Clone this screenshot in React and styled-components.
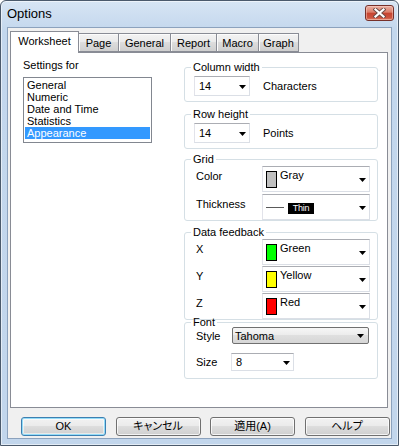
import React from "react";
import styled, { createGlobalStyle } from "styled-components";

const GlobalStyle = createGlobalStyle`
  html, body {
    margin: 0;
    padding: 0;
    background: #fff;
  }
  body {
    font-family: "Liberation Sans", "Noto Sans CJK JP", sans-serif;
    font-size: 11px;
    color: #000;
  }
`;

const Window = styled.div`
  width: 399px;
  height: 446px;
  box-sizing: border-box;
  border: 1px solid #4b5a6c;
  border-radius: 6px 6px 0 0;
  background: linear-gradient(#d7e5f4, #c3d7ed 30px, #c2d6ec);
  box-shadow: inset 0 0 0 1px rgba(255, 255, 255, 0.55);
  display: flex;
  flex-direction: column;
`;

const TitleBar = styled.div`
  height: 26px;
  flex: none;
  display: flex;
  align-items: flex-start;
  justify-content: space-between;
  padding: 0 4px 0 6px;
`;

const Title = styled.span`
  font-size: 13px;
  line-height: 16px;
  margin-top: 5px;
`;

const CloseButton = styled.div`
  width: 29px;
  height: 16px;
  margin-top: 4px;
  box-sizing: border-box;
  border: 1px solid #76302a;
  border-radius: 3px;
  background: linear-gradient(#eab0a3, #db7d69 45%, #c6432f 50%, #cd5540 85%, #df8870);
  box-shadow: inset 0 0 0 1px rgba(255, 220, 210, 0.45);
  display: grid;
  place-items: center;
`;

const Client = styled.div`
  flex: 1;
  min-height: 0;
  margin: 0 6px 6px;
  border: 1px solid #8ca2bd;
  background: #f0f0f0;
  padding: 3px 3px 2px 2px;
  display: flex;
  flex-direction: column;
`;

const TabStrip = styled.div`
  height: 21px;
  flex: none;
  display: flex;
  align-items: flex-end;
`;

const Tab = styled.div`
  position: relative;
  box-sizing: border-box;
  width: ${(p) => p.$w}px;
  height: ${(p) => (p.$active ? 22 : 19)}px;
  margin-left: ${(p) => (p.$first ? 0 : -1)}px;
  margin-bottom: ${(p) => (p.$active ? -1 : 0)}px;
  padding-bottom: ${(p) => (p.$active ? 3 : 0)}px;
  z-index: ${(p) => (p.$active ? 2 : 1)};
  border: 1px solid #898c95;
  border-bottom: ${(p) => (p.$active ? "none" : "1px solid #898c95")};
  background: ${(p) =>
    p.$active
      ? "#fff"
      : "linear-gradient(#f3f3f3, #ebebeb 45%, #dddddd 50%, #cfcfcf)"};
  box-shadow: ${(p) => (p.$active ? "none" : "inset 1px 1px 0 #fcfcfc")};
  display: grid;
  place-items: center;
  line-height: 12px;
`;

const TabPanel = styled.div`
  flex: 1;
  min-height: 0;
  border: 1px solid #898c95;
  background: #fff;
  padding: 6px 9px 0 12px;
  display: grid;
  grid-template-columns: 129px 194px;
  column-gap: 32px;
  align-items: start;
  align-content: start;
`;

const LeftColumn = styled.div`
  display: flex;
  flex-direction: column;
`;

const Caption = styled.div`
  line-height: 12px;
  margin-bottom: 6px;
`;

const ListBox = styled.div`
  height: 66px;
  box-sizing: border-box;
  border: 1px solid #828790;
  padding: 1px;
`;

const ListItem = styled.div`
  line-height: 12px;
  padding-left: 2px;
  background: ${(p) => (p.$selected ? "#3399ff" : "transparent")};
  color: ${(p) => (p.$selected ? "#fff" : "#000")};
`;

const RightColumn = styled.div`
  display: flex;
  flex-direction: column;
  margin-top: 2px;
`;

const GroupBox = styled.fieldset`
  margin: ${(p) => p.$top || 0}px 0 0;
  min-width: 0;
  border: 1px solid #d5dfe5;
  border-radius: 3px;
  padding: ${(p) => p.$pad};
  display: flex;
  flex-direction: column;
  gap: ${(p) => p.$gap || 0}px;
`;

const Legend = styled.legend`
  margin-left: -5px;
  padding: 0 2px;
  line-height: 12px;
  font-size: 11px;
`;

const UnitRow = styled.div`
  display: flex;
  align-items: center;
  gap: 13px;
  margin-left: -2px;
`;

const FieldRow = styled.div`
  display: flex;
  align-items: ${(p) => (p.$center ? "center" : "flex-start")};
  margin-top: ${(p) => p.$shift || 0}px;
`;

const FieldLabel = styled.span`
  width: ${(p) => p.$w}px;
  flex: none;
  line-height: 12px;
  margin-top: ${(p) => (p.$center ? 0 : 4)}px;
`;

const Combo = styled.div`
  box-sizing: border-box;
  width: ${(p) => p.$w}px;
  height: ${(p) => p.$h}px;
  flex: none;
  background: #fff;
  border: 1px solid #dbdfe6;
  border-top-color: #abadb3;
  border-left-color: #e2e3ea;
  display: flex;
  align-items: center;
  padding: 0 3px 0 4px;
  line-height: 12px;
`;

const ButtonCombo = styled(Combo)`
  border: 1px solid #707070;
  border-radius: 2px;
  background: linear-gradient(#f6f6f6, #ececec 45%, #dfdfdf 50%, #d6d6d6);
  padding: 0 4px 0 2px;
`;

const OwnerCombo = styled(Combo)`
  align-items: ${(p) => (p.$center ? "center" : "flex-start")};
  padding: 0 3px 0 3px;
`;

const Swatch = styled.span`
  width: 11px;
  height: 17px;
  box-sizing: border-box;
  flex: none;
  margin-top: 4px;
  border: 1px solid #000;
  background: ${(p) => p.$color};
`;

const SwatchText = styled.span`
  margin: 2px 0 0 3px;
`;

const LineSample = styled.span`
  width: 18px;
  height: 1px;
  background: #5a5a5a;
  flex: none;
`;

const ThinTag = styled.span`
  margin-left: 4px;
  width: 26px;
  height: 11px;
  background: #000;
  color: #fff;
  font-size: 9px;
  line-height: 11px;
  text-align: center;
  letter-spacing: -0.3px;
  margin-top: 2px;
`;

const ArrowBox = styled.span`
  margin-left: auto;
  align-self: center;
  display: flex;
  padding-top: 1px;
`;

const ButtonRow = styled.div`
  flex: none;
  margin-top: 9px;
  padding-left: 11px;
  display: grid;
  grid-template-columns: repeat(4, 85px);
  column-gap: 9.5px;
`;

const DialogButton = styled.div`
  box-sizing: border-box;
  height: 19px;
  border: 1px solid ${(p) => (p.$default ? "#3c7fb1" : "#707070")};
  border-radius: 3px;
  background: linear-gradient(#f2f2f2, #ebebeb 45%, #dddddd 50%, #cfcfcf);
  box-shadow: ${(p) =>
    p.$default
      ? "inset 0 0 0 1px #94dcf8, inset 0 0 0 2px rgba(255,255,255,0.5)"
      : "inset 0 0 0 1px rgba(255,255,255,0.75)"};
  display: grid;
  place-items: center;
  line-height: 15px;
  font-feature-settings: "palt";
`;

function Arrow() {
  return (
    <ArrowBox>
      <svg width="7" height="4" viewBox="0 0 7 4">
        <path d="M0 0h7L3.5 4z" fill="#000" />
      </svg>
    </ArrowBox>
  );
}

function CloseIcon() {
  return (
    <svg width="13" height="10" viewBox="0 0 13 10">
      <path d="M2.5 1.5l8 7M10.5 1.5l-8 7" stroke="#6b4a45" strokeWidth="4" strokeLinecap="square" />
      <path d="M2.5 1.5l8 7M10.5 1.5l-8 7" stroke="#fff" strokeWidth="2.2" strokeLinecap="square" />
    </svg>
  );
}

const tabs = [
  { label: "Worksheet", w: 69 },
  { label: "Page", w: 41 },
  { label: "General", w: 53 },
  { label: "Report", w: 47 },
  { label: "Macro", w: 43 },
  { label: "Graph", w: 41 },
];

const categories = ["General", "Numeric", "Date and Time", "Statistics", "Appearance"];

const feedback = [
  { axis: "X", name: "Green", color: "#00ff00" },
  { axis: "Y", name: "Yellow", color: "#ffff00" },
  { axis: "Z", name: "Red", color: "#ff0000" },
];

export default function App() {
  return (
    <>
      <GlobalStyle />
      <Window>
        <TitleBar>
          <Title>Options</Title>
          <CloseButton>
            <CloseIcon />
          </CloseButton>
        </TitleBar>
        <Client>
          <TabStrip>
            {tabs.map((t, i) => (
              <Tab key={t.label} $w={t.w} $first={i === 0} $active={i === 0}>
                {t.label}
              </Tab>
            ))}
          </TabStrip>
          <TabPanel>
            <LeftColumn>
              <Caption>Settings for</Caption>
              <ListBox>
                {categories.map((c) => (
                  <ListItem key={c} $selected={c === "Appearance"}>
                    {c}
                  </ListItem>
                ))}
              </ListBox>
            </LeftColumn>

            <RightColumn>
              <GroupBox $pad="3px 7px 5px 11px">
                <Legend>Column width</Legend>
                <UnitRow>
                  <Combo $w={56} $h={20}>
                    14
                    <Arrow />
                  </Combo>
                  <span>Characters</span>
                </UnitRow>
              </GroupBox>

              <GroupBox $top={6} $pad="3px 7px 5px 11px">
                <Legend>Row height</Legend>
                <UnitRow>
                  <Combo $w={56} $h={20}>
                    14
                    <Arrow />
                  </Combo>
                  <span>Points</span>
                </UnitRow>
              </GroupBox>

              <GroupBox $top={4} $pad="1px 7px 0 11px" $gap={2}>
                <Legend>Grid</Legend>
                <FieldRow>
                  <FieldLabel $w={66}>Color</FieldLabel>
                  <OwnerCombo $w={108} $h={26}>
                    <Swatch $color="#c0c0c0" />
                    <SwatchText>Gray</SwatchText>
                    <Arrow />
                  </OwnerCombo>
                </FieldRow>
                <FieldRow>
                  <FieldLabel $w={66}>Thickness</FieldLabel>
                  <OwnerCombo $w={108} $h={26} $center>
                    <LineSample />
                    <ThinTag>Thin</ThinTag>
                    <Arrow />
                  </OwnerCombo>
                </FieldRow>
              </GroupBox>

              <GroupBox $top={5} $pad="1px 7px 0 11px" $gap={1}>
                <Legend>Data feedback</Legend>
                {feedback.map((f) => (
                  <FieldRow key={f.axis}>
                    <FieldLabel $w={66}>{f.axis}</FieldLabel>
                    <OwnerCombo $w={108} $h={26}>
                      <Swatch $color={f.color} />
                      <SwatchText>{f.name}</SwatchText>
                      <Arrow />
                    </OwnerCombo>
                  </FieldRow>
                ))}
              </GroupBox>

              <GroupBox $top={-4} $pad="0 8px 7px 11px" $gap={9}>
                <Legend>Font</Legend>
                <FieldRow $center $shift={-1}>
                  <FieldLabel $w={36} $center>
                    Style
                  </FieldLabel>
                  <ButtonCombo $w={137} $h={17}>
                    Tahoma
                    <Arrow />
                  </ButtonCombo>
                </FieldRow>
                <FieldRow $center>
                  <FieldLabel $w={35} $center>
                    Size
                  </FieldLabel>
                  <Combo $w={63} $h={18}>
                    8
                    <Arrow />
                  </Combo>
                </FieldRow>
              </GroupBox>
            </RightColumn>
          </TabPanel>
          <ButtonRow>
            <DialogButton $default>OK</DialogButton>
            <DialogButton>キャンセル</DialogButton>
            <DialogButton>適用(A)</DialogButton>
            <DialogButton>ヘルプ</DialogButton>
          </ButtonRow>
        </Client>
      </Window>
    </>
  );
}
